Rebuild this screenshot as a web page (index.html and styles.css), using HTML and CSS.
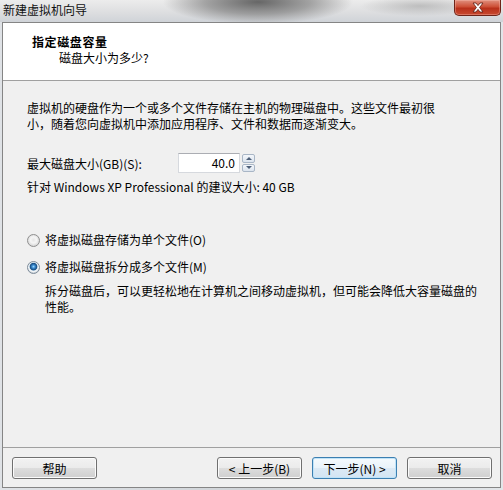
FILE: index.html
```html
<!doctype html>
<html>
    <head>
        <title>新建虚拟机向导</title>
        <link rel="stylesheet" href="styles.css">
    </head>
    <body>
        <div class="window">
            <div class="titlebar">
                <span class="title">新建虚拟机向导</span>
                <div class="close">
                    <svg width="14" height="11" viewBox="0 0 14 11">
                        <path d="M2 1h3l2 2.6L9 1h3L8.6 5.5 12 10H9L7 7.4 5 10H2l3.4-4.5z" fill="#fff" stroke="#5a1a10" stroke-width="0.8"/>
                    </svg>
                </div>
            </div>

            <div class="client">
                <div class="header">
                    <div class="header-title">指定磁盘容量</div>
                    <div class="header-sub">磁盘大小为多少?</div>
                </div>

                <div class="main">
                    <p class="desc">虚拟机的硬盘作为一个或多个文件存储在主机的物理磁盘中。这些文件最初很<br>小，随着您向虚拟机中添加应用程序、文件和数据而逐渐变大。</p>

                    <div class="size-row">
                        <label class="size-label">最大磁盘大小(GB)(S):</label>
                        <div class="spin">
                            <div class="spin-value">40.0</div>
                            <div class="spin-btns">
                                <div class="spin-btn"><span class="arrow up"></span></div>
                                <div class="spin-btn"><span class="arrow down"></span></div>
                            </div>
                        </div>
                    </div>
                    <div class="hint">针对 Windows XP Professional 的建议大小: 40 GB</div>

                    <div class="options">
                        <label class="option"><span class="radio"></span>将虚拟磁盘存储为单个文件(O)</label>
                        <label class="option"><span class="radio checked"></span>将虚拟磁盘拆分成多个文件(M)</label>
                        <p class="note">拆分磁盘后，可以更轻松地在计算机之间移动虚拟机，但可能会降低大容量磁盘的<br>性能。</p>
                    </div>
                </div>

                <div class="footer">
                    <button class="btn">帮助</button>
                    <button class="btn push">&lt; 上一步(B)</button>
                    <button class="btn default">下一步(N) &gt;</button>
                    <button class="btn">取消</button>
                </div>
            </div>
        </div>
    </body>
</html>
```

FILE: styles.css
```css
* {
    box-sizing: border-box;
}

body {
    margin: 0;
    font-family: "Noto Sans CJK SC", "Noto Sans", sans-serif;
    font-size: 12px;
    color: #000;
}

.window {
    width: 503px;
    height: 490px;
    display: flex;
    flex-direction: column;
    background: linear-gradient(90deg, #dfe2e6, #d0d4d8 50%, #e2e5e8);
    overflow: hidden;
}

.titlebar {
    height: 22px;
    display: flex;
    justify-content: space-between;
    align-items: flex-start;
    background:
        radial-gradient(ellipse 95px 22px at 258px 2px, #666, rgba(115, 115, 115, 0.6) 55%, rgba(160, 160, 160, 0) 100%),
        radial-gradient(ellipse 60px 10px at 420px 6px, rgba(150, 150, 150, 0.5), rgba(150, 150, 150, 0)),
        linear-gradient(#ececec, #dcdddf 60%, #cfd3d8);

    .title {
        padding: 2px 0 0 3px;
        line-height: 16px;
        color: #111;
    }

    .close {
        width: 47px;
        height: 16px;
        margin-right: 2px;
        display: grid;
        place-items: center;
        border: 1px solid #6e2418;
        border-top: none;
        border-radius: 0 0 5px 5px;
        background: linear-gradient(#e0907e, #cd4f36 45%, #b8301a 55%, #c84a30);
        box-shadow: inset 0 0 0 1px rgba(255, 200, 190, 0.35);
    }
}

.client {
    margin: 0 2px;
    height: 466px;
    border: 1px solid #858585;
    background: #f0f0f0;
    display: flex;
    flex-direction: column;
}

.header {
    height: 58px;
    background: #fff;
    border-bottom: 1px solid #a0a0a0;
    padding: 10px 0 0 29px;

    .header-title {
        font-weight: bold;
        line-height: 17px;
        letter-spacing: 0.6px;
    }

    .header-sub {
        padding-left: 27px;
        line-height: 16px;
    }
}

.main {
    flex: 1;
    padding: 19px 0 0 24px;

    .desc {
        margin: 0;
        line-height: 16px;
    }
}

.size-row {
    margin-top: 21px;
    display: flex;
    align-items: center;
    height: 20px;

    .size-label {
        width: 151px;
    }
}

.spin {
    display: flex;
    gap: 2px;
    height: 20px;

    .spin-value {
        width: 62px;
        height: 20px;
        border: 1px solid #d6d9de;
        border-top-color: #abadb3;
        background: #fff;
        text-align: right;
        padding-right: 4px;
        line-height: 18px;
    }

    .spin-btns {
        width: 13px;
        display: flex;
        flex-direction: column;
        gap: 1px;
        padding: 1px 0;
    }

    .spin-btn {
        flex: 1;
        display: grid;
        place-items: center;
        border: 1px solid #a9b6c6;
        border-radius: 2px;
        background: linear-gradient(#f4f7fb, #dce4ee);
    }

    .arrow {
        width: 0;
        height: 0;
        border-left: 3px solid transparent;
        border-right: 3px solid transparent;
    }

    .arrow.up {
        border-bottom: 3px solid #4d5f78;
    }

    .arrow.down {
        border-top: 3px solid #4d5f78;
    }
}

.hint {
    margin-top: 6px;
    line-height: 16px;
}

.options {
    margin-top: 37px;
    display: flex;
    flex-direction: column;
    gap: 11px;

    .option {
        display: flex;
        align-items: center;
        gap: 5px;
        line-height: 16px;
    }

    .note {
        margin: -3px 0 0 18px;
        line-height: 16px;
    }
}

.radio {
    width: 13px;
    height: 13px;
    border-radius: 50%;
    border: 1px solid #8f8f8f;
    background: radial-gradient(circle at 50% 45%, #e6e6e6 0, #f6f6f6 3px, #d9d9d9 6px);

    &.checked {
        border-color: #7d8b99;
        background: radial-gradient(circle at 50% 42%, #9fdcff 0, #3a8ad0 1.6px, #174c80 3.4px, #d8e6f0 4.2px, #f4f6f8 5px, #cfd6dc 6px);
    }
}

.footer {
    height: 40px;
    border-top: 1px solid #a0a0a0;
    padding: 9px 8px 0 9px;
    display: flex;
    align-items: flex-start;
    gap: 10px;

    .push {
        margin-left: auto;
    }
}

.btn {
    width: 85px;
    height: 22px;
    padding: 0;
    font: inherit;
    color: #000;
    border: 1px solid #707070;
    border-radius: 3px;
    background: linear-gradient(#f2f2f2, #ebebeb 50%, #dddddd 50%, #cfcfcf);
    box-shadow: inset 0 0 0 1px #fbfbfb;

    &.default {
        border-color: #3c7fb1;
        background: linear-gradient(#f5fafd, #e9f3fa 50%, #dceaf5 50%, #d3e5f3);
        box-shadow: inset 0 0 0 1px #bfe3f8;
    }
}
```
